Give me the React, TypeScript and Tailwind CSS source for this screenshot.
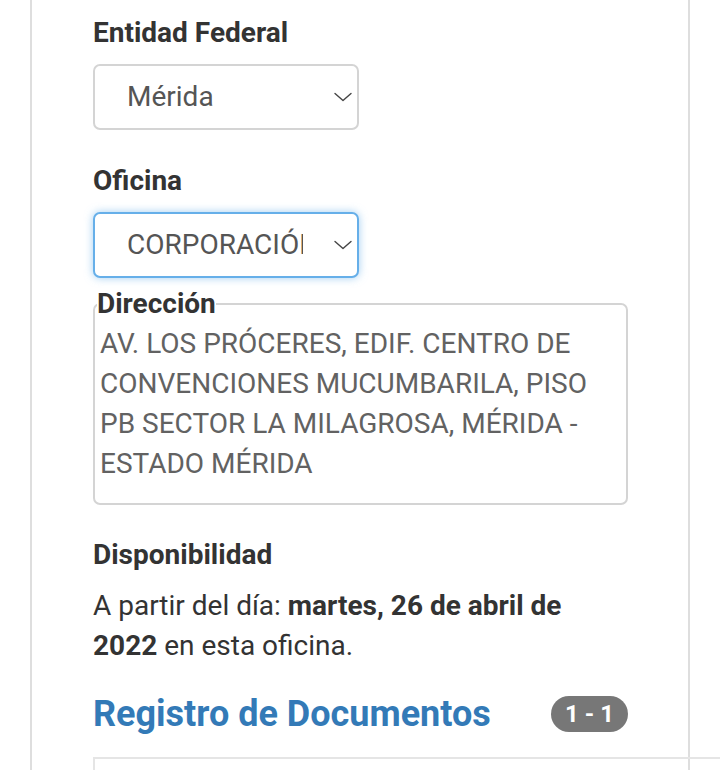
// Select de solo lectura con flecha
const Chevron = () => (
    <svg width="18" height="10" viewBox="0 0 18 10" fill="none" className="ml-auto mr-[3px] text-[#444]">
        <path d="M1 1.5 9 8.5 17 1.5" stroke="currentColor" strokeWidth="1.4" strokeLinecap="round" strokeLinejoin="round" />
    </svg>
);

const Selector = ({ value, focused }: { value: string; focused?: boolean }) => (
    <div
        className={
            focused
                ? 'flex h-[66px] w-[266px] items-center rounded-[7px] border-2 border-[#66afe9] bg-white pl-[32px] pr-[2px] shadow-[0_0_8px_rgba(102,175,233,0.6)]'
                : 'flex h-[66px] w-[266px] items-center rounded-[7px] border-2 border-[#d4d4d4] bg-white pl-[32px] pr-[2px]'
        }
    >
        <span className="block w-[176px] overflow-hidden whitespace-nowrap text-[28px] text-[#555]">{value}</span>
        <Chevron />
    </div>
);

const App = () => {
    return (
        <div className="h-[770px] w-[720px] overflow-hidden bg-white font-['Roboto',sans-serif]">
            <div className="ml-[30px] min-h-full w-[660px] border-x-2 border-[#dedede] pl-[61px] pt-[13px]">
                {/* Entidad */}
                <div className="text-[28px] font-bold leading-[40px] text-[#333]">Entidad Federal</div>
                <div className="mt-[11px]">
                    <Selector value="Mérida" />
                </div>

                {/* Oficina */}
                <div className="mt-[31px] text-[28px] font-bold leading-[40px] text-[#333]">Oficina</div>
                <div className="mt-[11px]">
                    <Selector value="CORPORACIÓN DE TURISMO" focused />
                </div>

                {/* Dirección de la oficina */}
                <fieldset className="mt-[6px] w-[535px] rounded-[7px] border-2 border-[#d4d4d4] pb-[19px] pl-[5px] pr-[8px]">
                    <legend className="-ml-[3px] text-[28px] font-bold leading-[40px] text-[#333]">Dirección</legend>
                    <p className="text-[28px] leading-[40px] text-[#626262]">
                        AV. LOS PRÓCERES, EDIF. CENTRO DE CONVENCIONES MUCUMBARILA, PISO PB SECTOR LA MILAGROSA, MÉRIDA - ESTADO MÉRIDA
                    </p>
                </fieldset>

                {/* Disponibilidad */}
                <div className="mt-[30px] text-[28px] font-bold leading-[40px] text-[#333]">Disponibilidad</div>
                <p className="mt-[11px] w-[520px] text-[28px] leading-[40px] text-[#333]">
                    A partir del día: <b>martes, 26 de abril de 2022</b> en esta oficina.
                </p>

                {/* Registro */}
                <div className="mt-[28px] flex w-[535px] items-center justify-between">
                    <h3 className="text-[36px] font-bold leading-[40px] text-[#337ab7]">Registro de Documentos</h3>
                    <span className="flex h-[36px] items-center rounded-full bg-[#777] px-[14px] text-[24px] font-bold text-white">
                        1 - 1
                    </span>
                </div>
                <div className="mt-[23px] h-[60px] w-[700px] border-l-2 border-t-2 border-[#e5e5e5]" />
            </div>
        </div>
    );
};

export default App;
